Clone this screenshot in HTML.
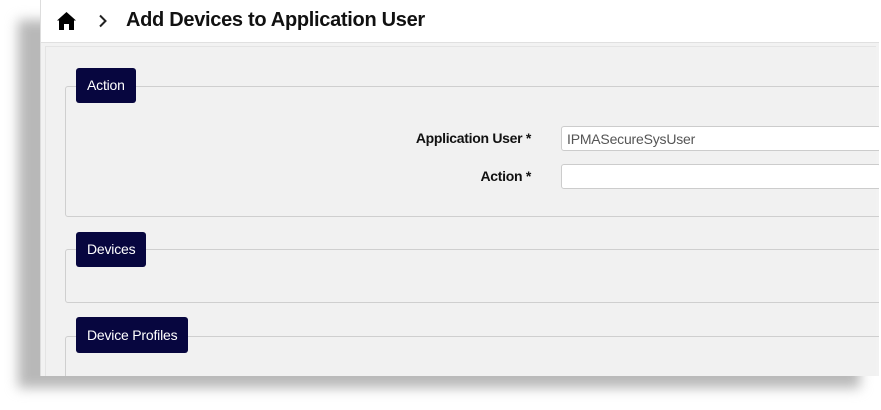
<!DOCTYPE html>
<html><head><style>
body{margin:0;width:881px;height:410px;background:#fff;position:relative;overflow:hidden;font-family:"Liberation Sans",sans-serif}
.shadow{position:absolute;left:18px;top:20px;width:842px;height:368px;background:#b8b8b8;filter:blur(6px)}
.win{position:absolute;left:40px;top:0;width:838px;height:376px;background:#f2f2f2;overflow:hidden;border-left:1px solid #ddd}
.hdr{position:absolute;left:0;top:0;width:100%;height:42px;background:#fff;border-bottom:1px solid #e0e0e0}
.title{position:absolute;left:85px;top:9px;font-size:20px;font-weight:bold;color:#111;letter-spacing:-0.3px}
.inner{position:absolute;left:4px;top:46px;width:830px;height:340px;background:#f1f1f1;border-top:1px solid #e4e4e4;border-left:1px solid #e4e4e4}
.fs{position:absolute;left:24px;width:830px;border:1px solid #cfcfcf;border-radius:3px}
.lg{position:absolute;left:35px;background:#07063f;color:#fff;font-size:14px;border-radius:3px;padding:0 11px;line-height:35px;letter-spacing:-0.2px}
.lbl{position:absolute;right:348px;font-size:14px;font-weight:bold;color:#111;letter-spacing:-0.3px}
.inp{position:absolute;left:520px;width:320px;height:25px;background:#fff;border:1px solid #ccc;border-radius:3px;font-size:14px;color:#555;line-height:24px;padding-left:5px;box-sizing:border-box;letter-spacing:-0.2px}
</style></head><body>
<div class="shadow"></div>
<div class="win">
<div class="hdr">
<svg style="position:absolute;left:15px;top:11px" width="21" height="20" viewBox="0 0 21 20"><path d="M10.5 1 L20 9.5 L18 9.5 L18 19 L13 19 L13 13 L8 13 L8 19 L3 19 L3 9.5 L1 9.5 Z" fill="#000"/></svg>
<svg style="position:absolute;left:57px;top:14px" width="10" height="14" viewBox="0 0 10 14"><path d="M2 1.5 L7.5 7 L2 12.5" fill="none" stroke="#222" stroke-width="2"/></svg>
<div class="title">Add Devices to Application User</div>
</div>
<div class="inner"></div>
<div class="fs" style="top:86px;height:129px"></div>
<div class="lg" style="top:68px">Action</div>
<div class="lbl" style="top:130px">Application User *</div>
<div class="inp" style="top:126px">IPMASecureSysUser</div>
<div class="lbl" style="top:168px">Action *</div>
<div class="inp" style="top:164px"></div>
<div class="fs" style="top:249px;height:52px"></div>
<div class="lg" style="top:232px">Devices</div>
<div class="fs" style="top:336px;height:60px"></div>
<div class="lg" style="top:317px;line-height:36px">Device Profiles</div>
</div>
</body></html>
